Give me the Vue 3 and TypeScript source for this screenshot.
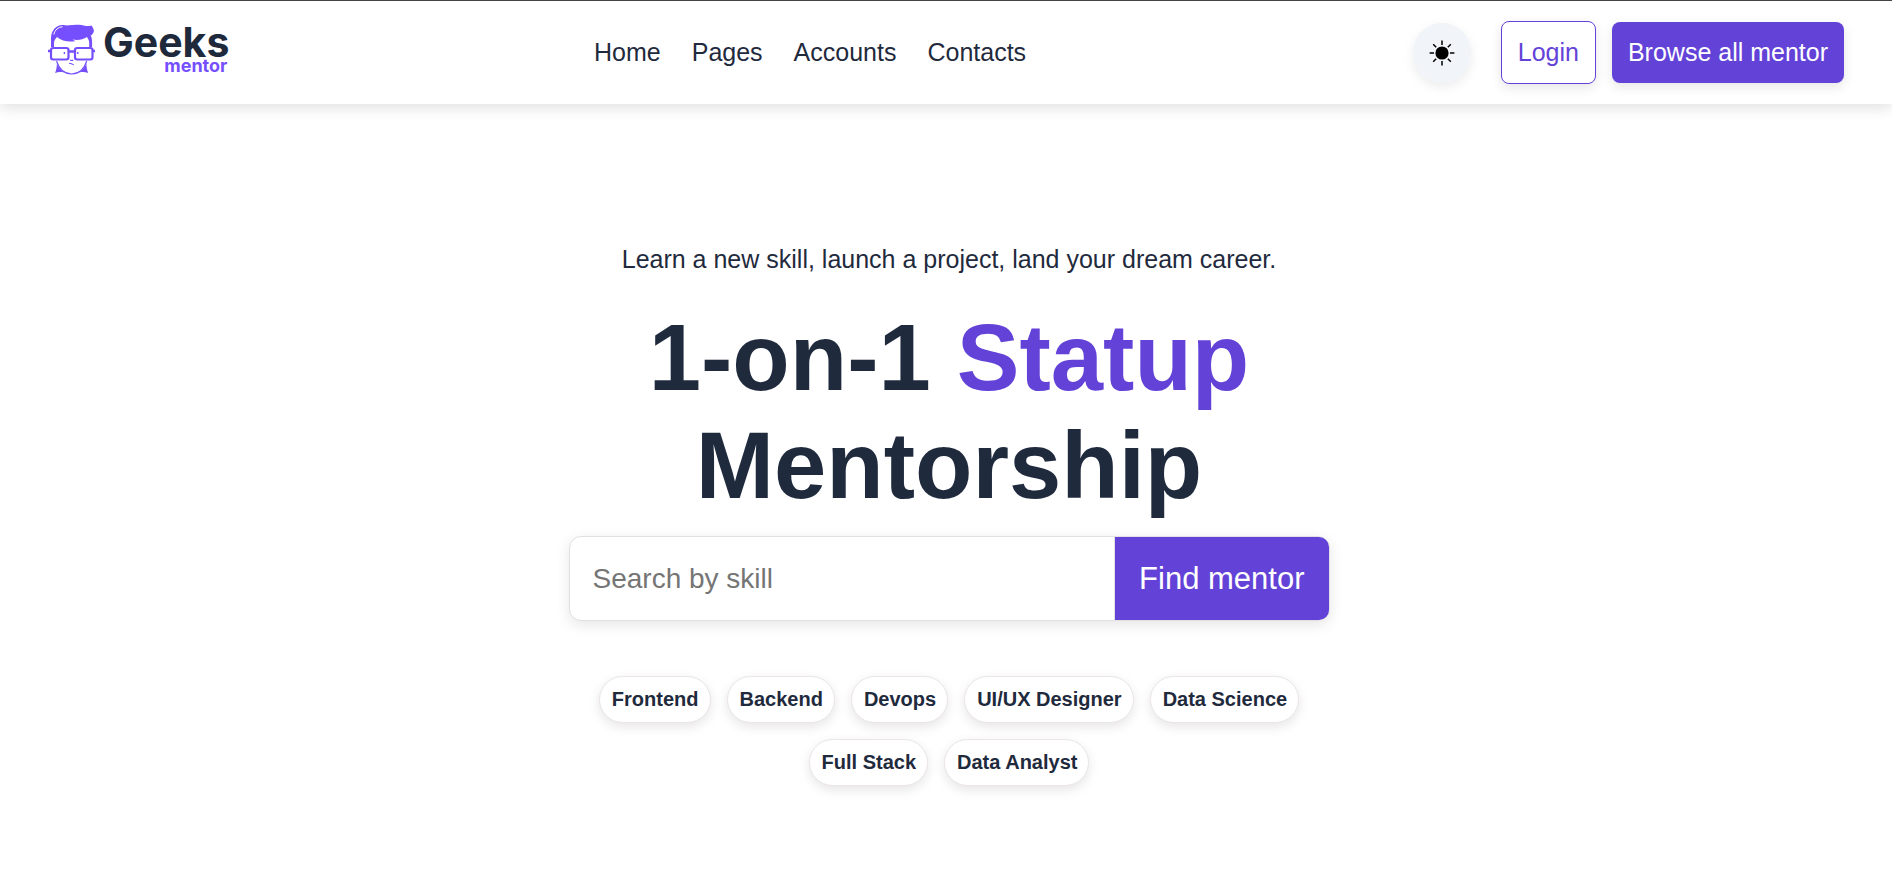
<script setup lang="ts">
import { ref } from 'vue'

const links: string[] = ['Home', 'Pages', 'Accounts', 'Contacts']
const skills: string[] = [
  'Frontend',
  'Backend',
  'Devops',
  'UI/UX Designer',
  'Data Science',
  'Full Stack',
  'Data Analyst',
]
const query = ref('')
</script>

<template>
  <div class="page">
    <header class="header">
      <a class="logo" href="#" aria-label="Geeks mentor">
        <svg class="face" viewBox="0 0 47 52" fill="none" stroke="#754ffe" aria-hidden="true">
          <path
            fill="#754ffe"
            stroke="none"
            d="M3 23V14C3.200 6.500 8 1.200 14.500 1c2.500-.2 4 .7 6.500.3 6-.9 12-.8 17 .7 2.800 0 4.200-.4 5.600-.6.5 1.200 2.200 3.200 2.400 5.600-.8 2.800-2 4-3.300 4.600 1.200 2.500 1.600 4.500 1.400 11.400h-2.900v-4.500c-.2-2.500-1.200-3.800-2.200-5.500-4.500 3-9.500 3.300-14.500 2.500 1 .8 2 1.300 3.200 1.600-7 1.400-14-.1-18.700-4.100C7.200 15 6.200 16.500 6 19v4z"
          />
          <path stroke="#fff" stroke-width="1" d="M5.800 10.500C7 5.800 10 3.200 14.500 2.800" />
          <rect x="3" y="24" width="17.500" height="11.500" rx="2.200" stroke-width="2.200" />
          <rect x="27" y="24" width="17.500" height="11.500" rx="2.200" stroke-width="2.200" />
          <path stroke-width="2.600" d="M20.500 27.500h6.500M0 27h3M44 27h3" />
          <path stroke-width="1.400" d="M16.400 28v2M29.800 28v2" />
          <path stroke-width="1.100" d="M22.200 36q1.600 1 3 0M21 39.300q2.600.2 4.800 1.600" />
          <path stroke-width="1.100" d="M8.600 37C11 45 16.500 49.800 23.700 50 31 49.800 36.300 45 38.700 37" />
          <path
            fill="#754ffe"
            stroke="none"
            d="M8.900 39.500c1.600 4 4 6.800 7.200 9-3-.6-6-.6-9 .4 1.200-2.900 1.800-6 1.800-9.400zM38.400 39.500c-1.600 4-4 6.800-7.200 9 3-.6 6-.6 9 .4-1.200-2.900-1.800-6-1.800-9.400z"
          />
        </svg>
        <span class="wordmark">
          <span class="brand">Geeks</span>
          <span class="sub">mentor</span>
        </span>
      </a>

      <nav class="nav">
        <a v-for="link in links" :key="link" href="#">{{ link }}</a>
      </nav>

      <div class="actions">
        <button class="theme" type="button" aria-label="Toggle theme">
          <svg viewBox="0 0 26 26" aria-hidden="true">
            <circle cx="13" cy="13" r="6.600" />
            <path
              d="M13 .6v4.400M13 21v4.400M.6 13h4.400M21 13h4.400M4.200 4.200l3 3M18.800 18.800l3 3M4.200 21.800l3-3M18.800 7.200l3-3"
              stroke="#000"
              stroke-width="1.500"
            />
          </svg>
        </button>
        <button class="btn outline" type="button">Login</button>
        <button class="btn solid" type="button">Browse all mentor</button>
      </div>
    </header>

    <main class="hero">
      <p class="lead">Learn a new skill, launch a project, land your dream career.</p>
      <h1>1-on-1 <span>Statup</span><br />Mentorship</h1>
      <form class="search" @submit.prevent>
        <input v-model="query" type="text" placeholder="Search by skill" aria-label="Search by skill" />
        <button type="submit">Find mentor</button>
      </form>
      <ul class="tags">
        <li v-for="skill in skills" :key="skill">
          <button type="button">{{ skill }}</button>
        </li>
      </ul>
    </main>
  </div>
</template>

<style>
body {
  margin: 0;
  background: #fff;
}
</style>

<style scoped>
.page {
  font-family: "Liberation Sans", Arial, sans-serif;
  color: #1f2a3d;
}
.page * {
  box-sizing: border-box;
}
button,
input {
  font: inherit;
}
button {
  cursor: pointer;
}
.header {
  display: flex;
  align-items: center;
  justify-content: space-between;
  min-height: 104px;
  padding: 0 48px;
  border-top: 1px solid #444;
  background: #fff;
  box-shadow: 0 4px 14px rgba(0, 0, 0, 0.12);
}
.logo {
  display: flex;
  align-items: flex-start;
  gap: 8px;
  padding-bottom: 6px;
  text-decoration: none;
  font-family: Inter, sans-serif;
  font-weight: 700;
}
.face {
  width: 47px;
  height: 52px;
}
.wordmark {
  display: flex;
  flex-direction: column;
  align-items: flex-end;
}
.brand {
  font-size: 41px;
  line-height: 36px;
  color: #1e293b;
}
.sub {
  padding-right: 2px;
  font-size: 18px;
  line-height: 12px;
  color: #754ffe;
}
.nav {
  display: flex;
  gap: 31px;
  font-size: 25px;
}
.nav a {
  color: inherit;
  text-decoration: none;
}
.actions {
  display: flex;
  align-items: center;
  gap: 16px;
  font-size: 25px;
}
.theme {
  display: grid;
  place-items: center;
  width: 58px;
  height: 60px;
  margin: 0 14px 0 22px;
  padding: 0;
  border: 0;
  border-radius: 50%;
  background: #f1f5f9;
  box-shadow: 0 4px 12px rgba(0, 0, 0, 0.08);
}
.theme svg {
  width: 26px;
  height: 26px;
}
.btn {
  padding: 16px;
  border: 0;
  border-radius: 8px;
  line-height: 29px;
  box-shadow: 0 4px 12px rgba(0, 0, 0, 0.1);
}
.outline {
  border: 1px solid #6342d8;
  background: #fff;
  color: #6342d8;
}
.solid {
  background: #6342d8;
  color: #fff;
}
.hero {
  display: flex;
  flex-direction: column;
  align-items: center;
  padding: 139px 0 96px 6px;
}
.lead {
  margin: 0;
  font-size: 25px;
  line-height: 32px;
}
h1 {
  margin: 29px 0 16px;
  font-size: 94px;
  line-height: 108px;
  text-align: center;
}
h1 span {
  color: #6342d8;
}
.search {
  display: flex;
  width: 100%;
  max-width: 761px;
  border: 1px solid #e2e0e2;
  border-radius: 12px;
  background: #fff;
  box-shadow: 0 4px 14px rgba(0, 0, 0, 0.1);
}
.search input {
  flex: 1;
  min-width: 0;
  padding: 0 23px;
  border: 0;
  border-right: 1px solid #e2e0e2;
  border-radius: 12px 0 0 12px;
  background: transparent;
  font-size: 28px;
}
.search input::placeholder {
  color: #757575;
}
.search button {
  padding: 24px;
  border: 0;
  border-radius: 0 10px 10px 0;
  background: #6342d8;
  color: #fff;
  font-size: 31px;
  line-height: 35px;
}
.tags {
  display: flex;
  flex-wrap: wrap;
  justify-content: center;
  gap: 16px;
  width: 100%;
  max-width: 761px;
  margin: 55px 0 0;
  padding: 0;
  list-style: none;
}
.tags button {
  display: block;
  padding: 10px 11px 11px 12px;
  border: 1px solid #ebe4e8;
  border-radius: 24px;
  background: #fff;
  color: inherit;
  font-size: 20px;
  font-weight: 700;
  line-height: 24px;
  box-shadow: 0 4px 12px rgba(0, 0, 0, 0.1);
}
</style>
